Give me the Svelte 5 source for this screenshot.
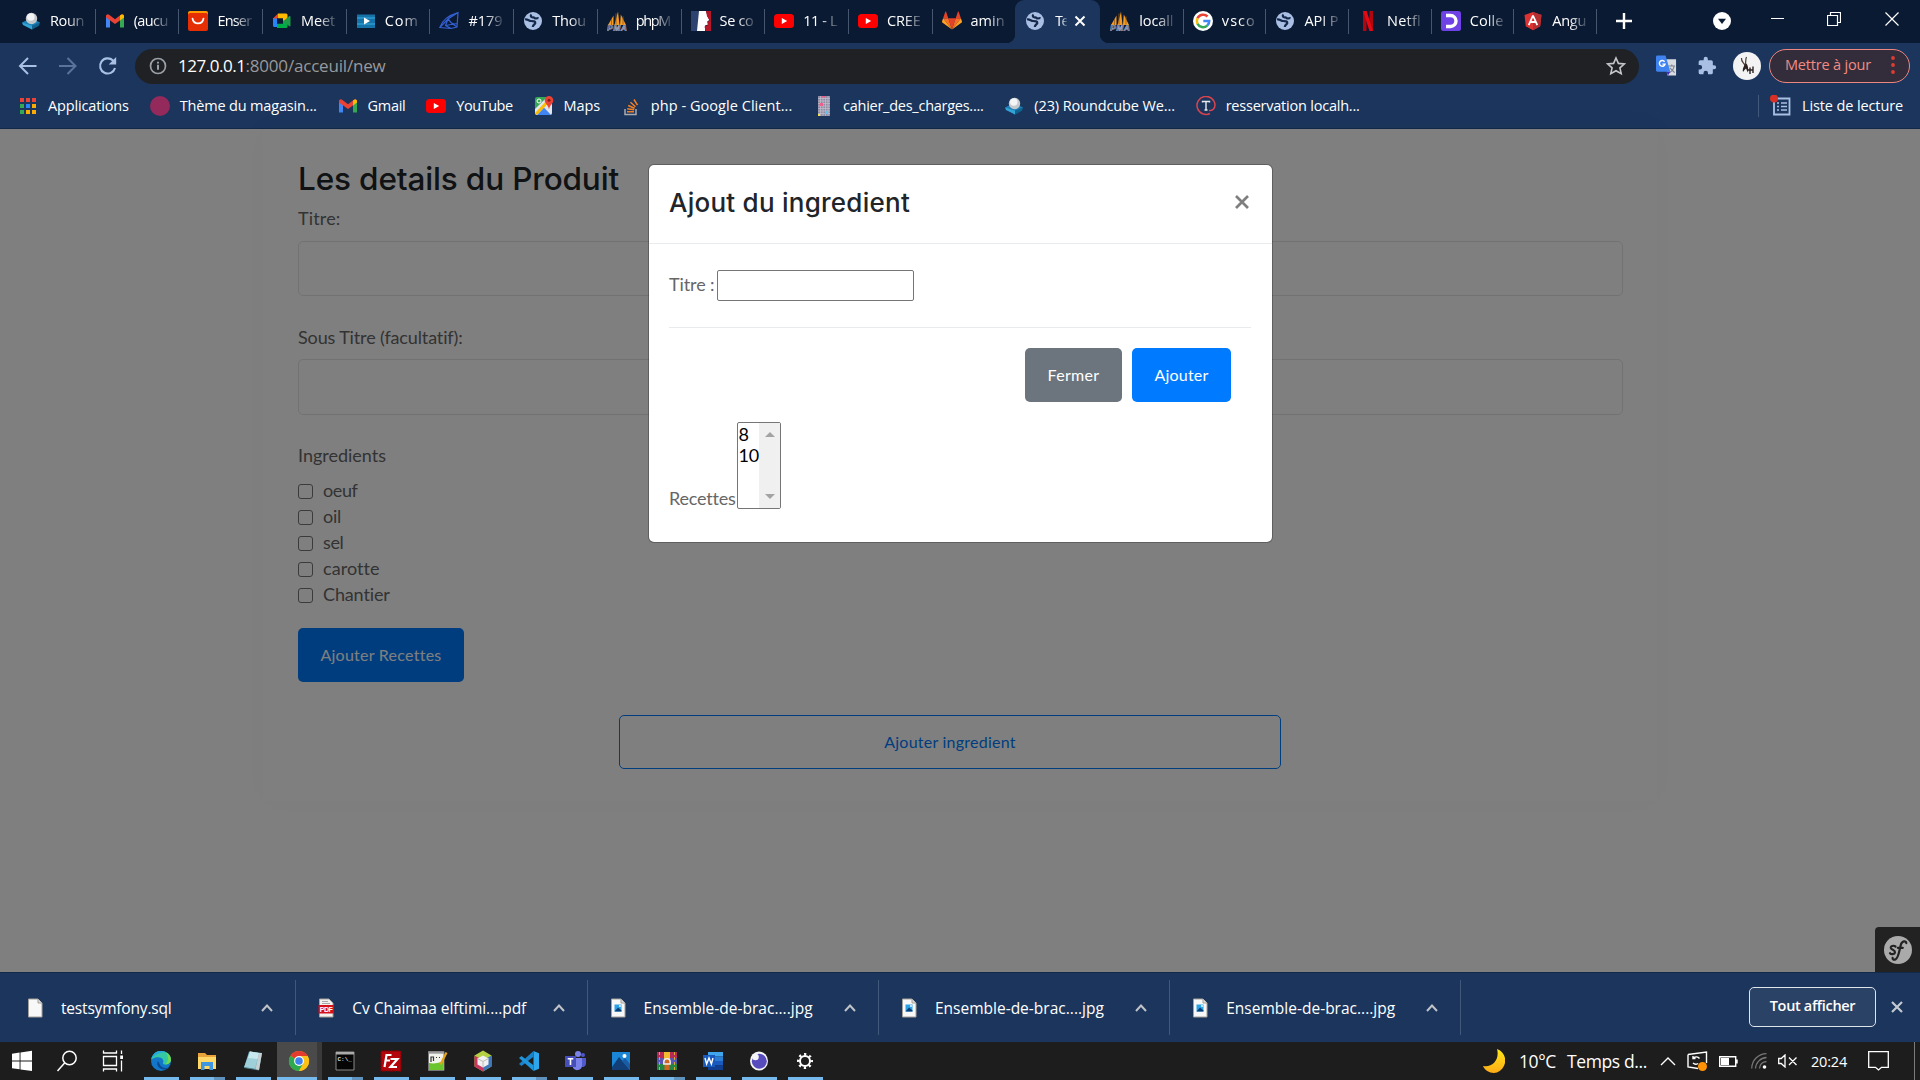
<script lang="ts">
  // Spreads or tightens the letters so that a label takes the given width.
  function fit(node: HTMLElement, width: number) {
    const natural = node.getBoundingClientRect().width;
    const count = Math.max(1, (node.textContent ?? '').length);
    node.style.letterSpacing = `${((width - natural) / count).toFixed(3)}px`;
  }

  const globe =
    '<circle cx="10" cy="10" r="9" fill="#a9c0e4"/><path d="M2 8.500c2.500-.8 4 1.500 6 1.500 2.500 0 4.500.3 4.300 2-.2 1.500-2.300 1.500-2.500 4" fill="none" stroke="#17294b" stroke-width="2.200"/><path d="M8.500 3.500C7 5 8 6.500 10 6.300c1.500-.2 1.300 1.200 2.800 1.200 1 0 1.700-.6 2.700-.4" fill="none" stroke="#17294b" stroke-width="2.200"/>';
  const youtube =
    '<rect y="3" width="20" height="14" rx="3.500" fill="#f00"/><path d="M7.800 6.900v6.200l5.400-3.100z" fill="#fff"/>';
  const gmail =
    '<path d="M1 16.500V5l4 3v8.500z" fill="#4285f4"/><path d="M15 16.500V8l4-3v11.500z" fill="#34a853"/><path d="M1 5.200C1 3.500 3 2.800 4.400 3.900L10 8.200v4.900L1 6.600z" fill="#ea4335"/><path d="M19 5.200c0-1.700-2-2.400-3.400-1.300L10 8.200v4.900l5-3.700V5.500L19 4.800z" fill="#ea4335"/><path d="M15 4.400c1.700-1.600 4-.9 4 .8v1.400l-4 3z" fill="#fbbc04"/>';
  const pma =
    '<path d="M1 14 6.500 4.500V14zM7.500 14 11 .5l1.500 13.500zM13 14l.8-10.500L19 14z" fill="#f59a22"/><path d="M9 2.500v11M16 5.500v8M4.500 8v6" stroke="#9a5a12" stroke-width=".8"/><text x="0" y="19.500" font-family="Liberation Sans" font-weight="700" font-style="italic" font-size="8.500" textLength="20" fill="#26325c" stroke="#a9adc4" stroke-width=".6">PMA</text>';
  const roundcube =
    '<path d="M1 11.500 10 7l9 4.500L11 18.500z" fill="#1c7fb5"/><path d="m1 11.500 10 3.200v3.800L2 14z" fill="#35a5d8"/><path d="m11 14.700 8-3.200-1 3.200-7 3.800z" fill="#11628f"/><circle cx="10.500" cy="7.500" r="5.700" fill="#c3c8cc"/><circle cx="9.800" cy="6" r="3.800" fill="#f3f4f5"/>';
  const icons: Record<string, string> = {
    globe, youtube, gmail, pma, roundcube,
    ali: '<path d="M0 2a2 2 0 0 1 2-2h16a2 2 0 0 1 2 2v4H0z" fill="#ff9a00"/><rect y="2" width="20" height="18" rx="2" fill="#e62e04"/><path d="M4.500 7.500c1 6.500 10 6.500 11 0" fill="none" stroke="#fff" stroke-width="1.700" stroke-linecap="round"/>',
    meet: '<path d="M1 7h4v9H2.500A1.500 1.500 0 0 1 1 14.500z" fill="#2684fc"/><path d="M6 2.500 1 7.500h5z" fill="#ea4335"/><path d="M6 2.500h8A1.500 1.500 0 0 1 15.500 4v4.500L11 11V7.500H6z" fill="#ffba00"/><path d="M5 12.500h6V9.500l4.500 1v5A1.500 1.500 0 0 1 14 17H5z" fill="#00ac47"/><path d="m11 10.500 6-5.300c.8-.6 1.500-.2 1.500.6v8.700c0 .8-.7 1.200-1.500.6z" fill="#1f9a49"/><path d="M5 7.500h6v5H5z" fill="#0b1a33"/>',
    video: '<rect x="1" y="3.500" width="18" height="13.500" fill="#1673a8"/><path d="M1 7h18M1 13h18" stroke="#2b9bd0" stroke-width="1.500"/><path d="M8 6.500v7l6-3.500z" fill="#fff"/>',
    mesh: '<path d="M.8 16.500C2.500 11.500 7 5 19 1.500L18 16 12 17.500.8 16.500zM19 1.500 9 8 6.500 14.500l5.500 3M9 8l3 3.500L18 16M6.500 14.500 18 12.500M9 8 .8 16.500" fill="none" stroke="#345fd0" stroke-width="1.200"/>',
    marianne: '<path d="M0 0h9v20H0z" fill="#2d4470"/><path d="M8 0h7l1.500 5 1.800 4-2 1.500.7 3-3 1v5.500H6z" fill="#fff"/><path d="M15 0h5v20h-5.500l-1-4.500 3.500-1.500-.5-3 2-1.700-2.500-4z" fill="#b4182a"/>',
    gitlab: '<path d="m10 18.500 3.700-11.300H6.300z" fill="#e24329"/><path d="M10 18.500 6.300 7.200H1.100z" fill="#fc6d26"/><path d="M1.100 7.200 0 10.600c-.1.300 0 .7.300.9l9.700 7z" fill="#fca326"/><path d="M1.100 7.200h5.200L4.100.8c-.1-.4-.6-.4-.8 0z" fill="#e24329"/><path d="m10 18.500 3.700-11.300h5.200z" fill="#fc6d26"/><path d="M18.900 7.200 20 10.600c.1.300 0 .7-.3.9L10 18.500z" fill="#fca326"/><path d="M18.900 7.200h-5.200L15.900.8c.1-.4.6-.4.800 0z" fill="#e24329"/>',
    google: '<circle cx="10" cy="10" r="10" fill="#fff"/><path d="M14.500 5.500A6.200 6.200 0 0 0 4.500 7.300" fill="none" stroke="#ea4335" stroke-width="2.600"/><path d="M4.500 7.300a6.200 6.200 0 0 0 0 5.400" fill="none" stroke="#fbbc04" stroke-width="2.600"/><path d="M4.500 12.700a6.200 6.200 0 0 0 9.700 1.900" fill="none" stroke="#34a853" stroke-width="2.600"/><path d="M14.200 14.600A6 6 0 0 0 16.200 10H10.300" fill="none" stroke="#4285f4" stroke-width="2.600"/>',
    netflix: '<path d="M5 0h3.500v20L5 20.300zM11.500 0H15v20.300l-3.500-.4z" fill="#b1060f"/><path d="M5 0h3.600L15 20.300l-3.600-.5z" fill="#e50914"/>',
    dyma: '<rect width="20" height="20" rx="2.500" fill="#6f42e5"/><path d="M5 4.500h4.500a5.500 5.500 0 0 1 0 11H5" fill="none" stroke="#fff" stroke-width="3.400"/>',
    angular: '<path d="m10 1 8.500 3-1.300 11.200L10 19.200l-7.200-4L1.500 4z" fill="#dd3333"/><path d="m10 1 8.500 3-1.300 11.200L10 19.200z" fill="#b52e31"/><path d="m10 4.500-4.300 9.700M10 4.500l4.300 9.700M7.300 11h5.400" stroke="#fff" stroke-width="1.800" fill="none"/>',
    apps: '<g fill="#ea4335"><path d="M2 2h4v4H2zM8 2h4v4H8zM14 2h4v4h-4z"/></g><path d="M2 8h4v4H2zM2 14h4v4H2z" fill="#34a853"/><path d="M8 8h4v4H8z" fill="#2684fc"/><path d="M14 8h4v4h-4zM8 14h4v4H8zM14 14h4v4h-4z" fill="#fbac04"/>',
    dot: '<circle cx="10" cy="10" r="10" fill="#932a5b"/>',
    maps: '<path d="M1 3a2 2 0 0 1 2-2h10L1 14z" fill="#34a853"/><path d="M1 13 13 1l5 6v10a2 2 0 0 1-2 2H3a2 2 0 0 1-2-2z" fill="#e3e6ea"/><path d="m3 19 7-7.500 7 7.500z" fill="#4285f4"/><path d="M1 17 14 3l2 2.500L3 19z" fill="#fbbc04"/><path d="M15 0a4.300 4.300 0 0 1 4.300 4.300C19.300 8 15.600 9 15 13.500 14.400 9 10.700 8 10.700 4.300A4.300 4.300 0 0 1 15 0z" fill="#ea4335"/><circle cx="15" cy="4.300" r="1.500" fill="#8c1b14"/><circle cx="5" cy="5" r="2" fill="none" stroke="#fff"/>',
    stack: '<path d="M4 13v5.500h11V13" fill="none" stroke="#a9abae" stroke-width="1.500"/><path d="M6 15.800h7M6.200 12.800l6.900 1M7.200 9.500l6.400 2.800M9.500 6.200l5 4.500M13 3.500l3.500 5.600" stroke="#f48024" stroke-width="1.500"/>',
    sheet: '<path d="M5 0h12v20H5z" fill="#8f8ca6"/><path d="M5 2.500h12M5 5h12M5 7.500h12M5 10h12M5 12.500h12M5 15h12M5 17.500h12M7.500 0v20M10 0v20M12.500 0v20M15 0v20" stroke="#c4c2d0" stroke-width=".7"/><path d="M9 0h4v1.500H9zM7 7h3v3H7z" fill="#f0608a"/><path d="M12 15h3v3h-3z" fill="#62c3ee"/><path d="M5 18h2v2H5z" fill="#f5e642"/>',
    tcircle: '<path d="M14 17.500A9 9 0 1 1 19 9c0 4-3 6-6 5.500" fill="none" stroke="#d9444e" stroke-width="1.500"/><path d="M6.500 6.500V5.500h7v1M10 5.500V14M8.500 14h3" fill="none" stroke="#e8eaf0" stroke-width="1.400"/>',
    file: '<path d="M3.500 1H13l4 4v14H3.500z" fill="#f8f8f8" stroke="#a4a09a"/><path d="M13 1v4h4" fill="#ddd" stroke="#a4a09a"/>',
    pdf: '<path d="M3.500 1H13l4 4v14H3.500z" fill="#f3f1f0" stroke="#a4a09a"/><path d="M6 3.500h6M6 5.500h8" stroke="#aaa"/><path d="M2.500 7h15.500v8.500H2.500z" fill="#d5101c"/><text x="3.800" y="13.800" font-family="Liberation Sans" font-weight="700" font-size="7" textLength="13" fill="#fff">PDF</text>',
    jpg: '<path d="M3.500 1H13l4 4v14H3.500z" fill="#f8f8f8" stroke="#a4a09a"/><path d="M13 1v4h4" fill="#ddd" stroke="#a4a09a"/><path d="M6.500 6.500h7v7h-7z" fill="#2aa2e8"/><path d="m6.500 13.500 3.500-4 3.500 3v1z" fill="#0c3d74"/><circle cx="12" cy="8" r=".9" fill="#fff"/>'
  };

  const desk: Record<string, string> = {
    windows: '<path d="M2 4.800 9.600 3.600v7.900H2zM10.500 3.500 22 1.800v9.700H10.500zM2 12.400h7.600v7.900L2 19.200zM10.500 12.400H22v9.700l-11.500-1.700z" fill="#fff"/>',
    search: '<circle cx="14.500" cy="9" r="6.700" fill="none" stroke="#fff" stroke-width="1.500"/><path d="M9.800 13.800 2.500 22" stroke="#fff" stroke-width="1.500"/>',
    taskview: '<path d="M1.500 1.500V4h13V1.500M1.500 22.500V20h13v2.500M1.500 7.500h13v9h-13zM19.500 1.500V5M19.500 11.500v11" fill="none" stroke="#fff" stroke-width="1.300"/><path d="M18.200 6.500h2.800v3.500h-2.800z" fill="#fff"/>',
    edge: '<circle cx="12" cy="12" r="10" fill="#1277c9"/><path d="M2.200 10.500C3.500 4.500 7.500 2 12 2c6 0 10 4 10 8.500 0 3.500-3 5-5.500 5-1.800 0-3-.7-2.500-1.500 2-4-3.500-8.500-11.800-3.500z" fill="#35c6a4"/><path d="M2.200 10.500C3.500 4.500 7.500 2 12 2c2 0 3.500.3 5 1.300-4-.2-11 1.200-14.800 7.200z" fill="#23a8e0"/><path d="M9 12c-2.500 4 1.500 9 7 8.500 2-.2 3.500-1.200 4.500-2.200-3.500 1.500-8.500 1-10-3.500z" fill="#0b4a94"/><path d="M17 3.500c4 2 5.500 5.500 4.800 8.500-1 2.500-3.500 3.400-5.300 3.400 3-3.400 3.500-7.900.5-11.900z" fill="#71d950"/>',
    folder: '<path d="M3 4h7l2 2h9v14H3z" fill="#e8a33a"/><path d="M3 8h18v12H3z" fill="#ffd868"/><path d="M6 21v-8h12v8h-3.500v-4h-5v4z" fill="#3c97e0"/>',
    notebook: '<path d="M8 2.500 21 4l-3 17L3 18.500z" fill="#6fb0c0"/><path d="M9 2.500 18 4l-4 16L3 18.500z" fill="#9fd0da"/><path d="M9 2.500 18 4l-1.500 6-9.500-1z" fill="#c9e8ee"/><path d="M3 18.500l15 2.500" stroke="#4f7b88" stroke-width="1"/><path d="m18 4 3 0-3 17-3.500-.7z" fill="#c7cfd1"/>',
    chrome: '<circle cx="12" cy="12" r="10" fill="#fbc116"/><path d="M12 12 3.300 7A10 10 0 0 1 20.700 7z" fill="#e33b2e"/><path d="M12 12 3.300 7A10 10 0 0 0 12 22l4.300-7.500z" fill="#2da94f"/><path d="M12 7h8.700a10 10 0 0 1-8.700 15l4.300-7.500z" fill="#fbc116"/><circle cx="12" cy="12" r="4.900" fill="#fff"/><circle cx="12" cy="12" r="3.800" fill="#3f82ed"/>',
    cmd: '<path d="M3 3h18v18H3z" fill="#050505" stroke="#8a8a8a"/><path d="M3 3h18v2.500H3z" fill="#aaa"/><text x="4.500" y="12" font-family="Liberation Mono" font-weight="700" font-size="6" fill="#ddd">C:\\_</text>',
    filezilla: '<path d="M2 2h20v20H2z" fill="#b3050c" stroke="#7c0408" stroke-width="1.500" stroke-dasharray="1.500 1"/><path d="M12.500 6H7.500L5.500 18M6.500 11.500h4.500M11.500 10h7l-7 8h6.500" fill="none" stroke="#fff" stroke-width="2.200"/>',
    notepadpp: '<path d="M3.500 2.500h15.500v19H3.500z" fill="#f3f3ee" stroke="#777"/><path d="M4 14c5 1 10 0 14.500-2v9H4z" fill="#6bc52e"/><path d="M3.500 2.500h15.500v2.200H3.500z" fill="#9b9b9b"/><path d="M6 13V8h2.500v4M11 8.500h1M14 8.500h1" stroke="#333" fill="none" stroke-width="1.200"/><path d="m21.500 3.500-6 12" stroke="#e6a519" stroke-width="2.200"/>',
    netbeans: '<path d="M12 1.500 20.500 6.500v11L12 22.500l-8.500-5v-11z" fill="#b5d043"/><path d="M3.500 6.500v11l8.500 5v-5L8 14V9z" fill="#c93661"/><path d="M20.500 6.500v11l-8.500 5v-5l4-3.500V9z" fill="#3e78b8"/><path d="m12 6.500 5.500 3v6L12 18.500 6.500 15.500v-6z" fill="#f1f1f1"/><path d="m6.500 9.500 5.500 3 5.500-3M12 12.500v6" stroke="#bbb" fill="none"/>',
    vscode: '<path d="M16.500 2 22 4.300v15.400L16.500 22z" fill="#2da6ee"/><path d="M16.500 2v5.800L4.500 17 2 15z" fill="#1a83ca"/><path d="M16.500 22v-5.800L4.500 7 2 9z" fill="#1f95dc"/>',
    teams: '<circle cx="15" cy="5" r="3" fill="#7b83eb"/><circle cx="20" cy="6" r="2" fill="#5059c9"/><path d="M17 9h6v6a3.500 3.500 0 0 1-6 2z" fill="#5059c9"/><path d="M10 9h9v8a5 5 0 0 1-9 2z" fill="#7b83eb"/><path d="M2 7h11v11H2z" fill="#464eb8"/><path d="M4.700 9.700h5.600M7.500 9.700v6.300" stroke="#fff" stroke-width="1.600"/>',
    photos: '<path d="M3 3h18v18H3z" fill="#1b86d8"/><path d="M3 18 10 8l11 13H3z" fill="#123f78"/><path d="m13 12 3-3 5 6v6z" fill="#1a5ca3"/><circle cx="15.500" cy="7" r="2" fill="#fff"/>',
    winrar: '<path d="M2 3h20v6H2z" fill="#b72a55"/><path d="M2 9h20v6H2z" fill="#5657b5"/><path d="M2 15h20v6H2z" fill="#238443"/><path d="M4.500 3v18M19.500 3v18" stroke="#d8a836" stroke-width="1" stroke-dasharray="3 2"/><path d="M9.500 3h5v18h-5z" fill="#d06622"/><path d="M9 3h6v7H9z" fill="#f1bd2e"/><path d="M8.800 13a3.200 3.200 0 0 1 6.400 0v2H8.800z" fill="none" stroke="#eee" stroke-width="1.500"/>',
    word: '<path d="M7 3h15v4.500H7z" fill="#41a5ee"/><path d="M7 7.500h15V12H7z" fill="#2b7cd3"/><path d="M7 12h15v4.500H7z" fill="#185abd"/><path d="M7 16.500h15V21H7z" fill="#103f91"/><path d="M2 6h12v12H2z" fill="#185abd"/><path d="m4 9 1.600 6L8 9l2.400 6L12 9" fill="none" stroke="#fff" stroke-width="1.400"/>',
    eclipse: '<ellipse cx="12" cy="12" rx="9" ry="9.500" fill="#f5f5f5"/><circle cx="12.300" cy="12.200" r="7.500" fill="#574bbd"/><circle cx="8.500" cy="8" r="3.300" fill="#f5f5f5"/>',
    gear: '<circle cx="12" cy="12" r="5" fill="none" stroke="#fff" stroke-width="2"/><circle cx="12" cy="12" r="6.700" fill="none" stroke="#fff" stroke-width="2.600" stroke-dasharray="2.200 3.060" stroke-dashoffset="1.100"/>'
  };

  const tabs = [
    ['roundcube', 'Roun'], ['gmail', '(aucu'], ['ali', 'Enser'], ['meet', 'Meet'], ['video', 'Com'],
    ['mesh', '#179'], ['globe', 'Thou'], ['pma', 'phpM'], ['marianne', 'Se co'], ['youtube', '11 - L'],
    ['youtube', 'CREE'], ['gitlab', 'amin']
  ];
  const tabsAfter = [
    ['pma', 'locall'], ['google', 'vsco'], ['globe', 'API P'], ['netflix', 'Netfl'], ['dyma', 'Colle'], ['angular', 'Angu']
  ];
  const bookmarks: [string, string, number][] = [
    ['apps', 'Applications', 81], ['dot', 'Thème du magasin...', 137], ['gmail', 'Gmail', 38],
    ['youtube', 'YouTube', 56.5], ['maps', 'Maps', 36.5], ['stack', 'php - Google Client...', 141.5],
    ['sheet', 'cahier_des_charges....', 140.5], ['roundcube', '(23) Roundcube We...', 140.500], ['tcircle', 'resservation localh...', 134]
  ];
  const ingredients: [string, number][] = [['oeuf', 34.5], ['oil', 18], ['sel', 20.5], ['carotte', 56], ['Chantier', 67]];
  const downloads: [string, string, number][] = [
    ['file', 'testsymfony.sql', 110.5], ['pdf', 'Cv Chaimaa elftimi....pdf', 174],
    ['jpg', 'Ensemble-de-brac....jpg', 169], ['jpg', 'Ensemble-de-brac....jpg', 169], ['jpg', 'Ensemble-de-brac....jpg', 169]
  ];
  // name, and how the window indicator below the icon looks
  const apps: [string, string][] = [
    ['windows', ''], ['search', ''], ['taskview', ''], ['edge', 'one'], ['folder', 'many'], ['notebook', 'one'],
    ['chrome', 'current'], ['cmd', 'many'], ['filezilla', 'one'], ['notepadpp', 'one'], ['netbeans', 'one'],
    ['vscode', 'many'], ['teams', 'one'], ['photos', 'one'], ['winrar', 'many'], ['word', 'one'], ['eclipse', 'one'], ['gear', 'one']
  ];
</script>

{#snippet icon(name: string)}
  <svg class="icon" viewBox="0 0 20 20">{@html icons[name]}</svg>
{/snippet}

<div class="screen">
  <div class="tabstrip">
    {#each tabs as [name, title], i}
      <div class="tab wide" class:last={i === tabs.length - 1}>{@render icon(name)}<span class="title"><span use:fit={34}>{title}</span></span></div>
    {/each}
    <div class="tab active">
      {@render icon('globe')}<span class="title short"><span>Te</span></span>
      <svg class="close" viewBox="0 0 12 12"><path d="M1.500 1.500l9 9M10.500 1.500l-9 9" stroke="#fff" stroke-width="2" /></svg>
    </div>
    {#each tabsAfter as [name, title]}
      <div class="tab">{@render icon(name)}<span class="title"><span use:fit={34}>{title}</span></span></div>
    {/each}
    <svg class="plus" viewBox="0 0 16 16"><path d="M8 0v16M0 8h16" stroke="#fff" stroke-width="2.400" /></svg>
    <div class="window-buttons">
      <svg width="18" height="18" viewBox="0 0 18 18"><circle cx="9" cy="9" r="9" fill="#fff" /><path d="M5 6.800h8l-4 5.200z" fill="#0b1a33" /></svg>
      <svg width="13" height="13" viewBox="0 0 13 13"><path d="M0 6.500h13" stroke="#fff" /></svg>
      <svg width="14" height="14" viewBox="0 0 14 14"><path d="M.5 3.500h10v10H.5zM3.500 3.500v-3h10v10h-3" fill="none" stroke="#fff" stroke-width="1.200" /></svg>
      <svg width="14" height="14" viewBox="0 0 14 14"><path d="M.5.5l13 13M13.500.5l-13 13" stroke="#fff" stroke-width="1.200" /></svg>
    </div>
  </div>

  <div class="toolbar">
    <svg class="nav" viewBox="0 0 20 20"><path d="M18.500 10H2.500M10 2 2 10l8 8" fill="none" stroke="#a9c0e4" stroke-width="2" /></svg>
    <svg class="nav dim" viewBox="0 0 20 20"><path d="M1 10h16M9.500 2l8 8-8 8" fill="none" stroke="#a9c0e4" stroke-width="2" /></svg>
    <svg class="nav" viewBox="0 0 20 20"><path d="M17 12A7.600 7.600 0 1 1 15 4.500L16.500 6" fill="none" stroke="#a9c0e4" stroke-width="2.100" /><path d="M18.200 1v7.500h-7.500z" fill="#a9c0e4" /></svg>
    <div class="omnibox">
      <svg width="18" height="18" viewBox="0 0 18 18"><circle cx="9" cy="9" r="7.500" fill="none" stroke="#9aa0a6" stroke-width="1.700" /><path d="M9 7.800v5M9 4.700v1.900" stroke="#9aa0a6" stroke-width="2" /></svg>
      <div class="url"><span class="host" use:fit={67.5}>127.0.0.1</span><span use:fit={140}>:8000/acceuil/new</span></div>
      <svg class="star" viewBox="0 0 20 20"><path d="m10 2 2.400 5.400 5.900.6-4.400 3.900 1.300 5.800L10 14.700l-5.200 3 1.300-5.800L1.700 8l5.900-.6z" fill="none" stroke="#c3c6ca" stroke-width="1.600" /></svg>
    </div>
    <svg class="translate" viewBox="0 0 22 22"><path d="M9 4h12v17H12z" fill="#d8dbe0" /><path d="M13 11h7M16.500 9.500V11M14 18c3-1.500 4.500-4 5-7M14.500 13l5 5" stroke="#78818c" stroke-width="1.200" fill="none" /><path d="M1.500 0h8.500l5 17H1.500A1.500 1.500 0 0 1 0 15.500v-14A1.500 1.500 0 0 1 1.500 0z" fill="#3f83f1" /><path d="m11 17 4 0-2.500 4z" fill="#4527c9" /><path d="M9 6.500A3 3 0 1 0 9.500 9H6.700" fill="none" stroke="#fff" stroke-width="1.500" /></svg>
    <svg class="puzzle" viewBox="0 0 24 24"><path d="M20.500 11H19V7a2 2 0 0 0-2-2h-4V3.500a2.500 2.500 0 0 0-5 0V5H4a2 2 0 0 0-2 2v3.800h1.500a2.700 2.700 0 0 1 0 5.400H2V20a2 2 0 0 0 2 2h3.800v-1.500a2.700 2.700 0 0 1 5.400 0V22H17a2 2 0 0 0 2-2v-4h1.500a2.500 2.500 0 0 0 0-5z" fill="#a9c0e4" /></svg>
    <svg class="avatar" viewBox="0 0 28 28"><circle cx="14" cy="14" r="14" fill="#f3f3f4" /><path d="M8.500 6c-.5 4 3 5 3.500 8M13.500 5c-1.500 3 0 5-1.500 8" fill="none" stroke="#4a3a36" stroke-width="1.200" /><path d="M10 20c-1-4 2-8 3.500-8.500 1.500 2 2 5 1.500 9-1-1.500-1.500-3-2-4-1 1-2 2-3 3.500z" fill="#2c2120" /><path d="M15 18h5M17 15.500V22M20 14.500V21" fill="none" stroke="#2c2120" stroke-width="1.400" /></svg>
    <div class="update">
      <span use:fit={86}>Mettre à jour</span>
      <svg width="4" height="20" viewBox="0 0 4 20"><g fill="#e03c31"><circle cx="2" cy="3" r="1.900" /><circle cx="2" cy="10" r="1.900" /><circle cx="2" cy="17" r="1.900" /></g></svg>
    </div>
  </div>

  <div class="bookmarks">
    {#each bookmarks as [name, label, width]}
      <div class="bookmark">{@render icon(name)}<span use:fit={width}>{label}</span></div>
    {/each}
    <div class="reading">
      <svg width="22" height="22" viewBox="0 0 22 22"><path d="M4 3.500h15.500v16H4z" fill="none" stroke="#a9c0e4" stroke-width="1.800" /><path d="M7 8h2M11 8h6M7 11.500h2M11 11.500h6M7 15h2M11 15h6" stroke="#a9c0e4" stroke-width="1.500" /><circle cx="4" cy="3.500" r="4" fill="#d93025" /></svg>
      <span use:fit={101}>Liste de lecture</span>
    </div>
  </div>

  <div class="page">
    <div class="card">
      <h2><span use:fit={321}>Les details du Produit</span></h2>
      <div class="label"><span use:fit={42.500}>Titre:</span></div>
      <div class="field"></div>
      <div class="label second"><span use:fit={165}>Sous Titre (facultatif):</span></div>
      <div class="field"></div>
      <div class="label third"><span use:fit={88}>Ingredients</span></div>
      <div class="checks">
        {#each ingredients as [label, width]}
          <div class="check"><i></i><span use:fit={width}>{label}</span></div>
        {/each}
      </div>
      <div class="btn add-recipe"><span use:fit={120.500}>Ajouter Recettes</span></div>
      <div class="btn outline"><span use:fit={131.500}>Ajouter ingredient</span></div>
    </div>

    <div class="overlay">
      <div class="modal">
        <div class="modal-header">
          <h4><span use:fit={241}>Ajout du ingredient</span></h4>
          <svg class="modal-close" viewBox="0 0 14 14"><path d="M1 1l12 12M13 1L1 13" stroke="#7f7f7f" stroke-width="2.700" /></svg>
        </div>
        <div class="modal-body">
          <div class="row"><span use:fit={45.500}>Titre :</span><div class="text-input"></div></div>
          <div class="modal-footer">
            <div class="btn grey"><span use:fit={52}>Fermer</span></div>
            <div class="btn blue"><span use:fit={54}>Ajouter</span></div>
          </div>
          <div class="row recipes">
            <span use:fit={66}>Recettes</span>
            <div class="listbox">
              <div class="options"><span>8</span><span>10</span></div>
              <div class="scroll"><i class="up"></i><i class="down"></i></div>
            </div>
          </div>
        </div>
      </div>
    </div>

    <div class="symfony">
      <svg width="28" height="28" viewBox="0 0 28 28"><circle cx="14" cy="14" r="14" fill="#aaa" /><g fill="none" stroke="#222" stroke-width="2.200" stroke-linecap="round"><path d="M11.500 10.500c-2-1.500-5-.5-4.700 1.500.4 2 4.500 1.700 4.200 4.300-.3 2.200-4 2.500-5 .8" /><path d="M22.300 7.200c.2-2.400-3.800-2.700-5.200.8-1.500 4-2.200 14-5.600 15.400-2.200.8-3.200-.4-2.900-1.600M13.800 11.800h5" /></g></svg>
    </div>
  </div>

  <div class="downloads">
    {#each downloads as [name, label, width]}
      <div class="download">
        {@render icon(name)}<span use:fit={width}>{label}</span>
        <svg class="chev" viewBox="0 0 12 8"><path d="M1 7l5-5.500L11 7" fill="none" stroke="#c0c3c8" stroke-width="2" /></svg>
      </div>
    {/each}
    <div class="show-all"><span use:fit={85.500}>Tout afficher</span></div>
    <svg class="shelf-close" viewBox="0 0 12 12"><path d="M1 1l10 10M11 1L1 11" stroke="#c3c9d2" stroke-width="2.200" /></svg>
  </div>

  <div class="taskbar">
    {#each apps as [name, state]}
      <div class="app {state}"><svg viewBox="0 0 24 24">{@html desk[name]}</svg></div>
    {/each}
    <div class="tray">
      <svg class="moon" viewBox="0 0 22 24"><defs><linearGradient id="moonfill" x1="0" y1="0" x2="0" y2="1"><stop offset="0" stop-color="#ffe818" /><stop offset="1" stop-color="#ffab16" /></linearGradient></defs><path d="M14 0C25 4 25 19 14 23.500 8 25 2 22 0 17c9 2 17-6 14-17z" fill="url(#moonfill)" /></svg>
      <span class="weather temp" use:fit={37}>10°C</span>
      <span class="weather sky" use:fit={80}>Temps d...</span>
      <svg class="up-arrow" viewBox="0 0 16 9"><path d="M1 8l7-7 7 7" fill="none" stroke="#fff" stroke-width="1.400" /></svg>
      <svg class="sync" viewBox="0 0 21 20"><path d="M1 3.500 19.500 1v11M11 17.500 1 16V3.500" fill="none" stroke="#fff" stroke-width="1.400" /><path d="M12.500 7.500a4 4 0 0 0-6-.5M6 5v2.500h2.500M6 12a4 4 0 0 0 5 .5" fill="none" stroke="#fff" stroke-width="1.400" /><circle cx="15.500" cy="15.500" r="4.500" fill="#ff9305" /></svg>
      <svg class="battery" viewBox="0 0 19 11"><path d="M.7.700h16v9.600H.700zM18 3.500v4" fill="none" stroke="#fff" stroke-width="1.400" /><path d="M2 2h8v7H2z" fill="#fff" /></svg>
      <svg class="wifi" viewBox="0 0 16 16"><g fill="none" stroke="#777" stroke-width="1.300"><path d="M.7 15.500C1 7 7 1 15.500.7M4.500 15.500c.3-6 5-10.700 11-11M8.500 15.500c.2-4 3-6.800 7-7" /></g><circle cx="13.500" cy="14" r="1.800" fill="#fff" /></svg>
      <svg class="speaker" viewBox="0 0 20 14"><path d="M.7 4.500h2.500L7 1v12L3.200 9.500H.7zM11 3.500l7.500 7.500M18.500 3.500 11 11" fill="none" stroke="#fff" stroke-width="1.300" /></svg>
      <span class="clock" use:fit={36}>20:24</span>
      <svg class="notice" viewBox="0 0 21 20"><path d="M.7.700h19.600v15.600h-6.800L10.500 19l-3-2.700H.7z" fill="none" stroke="#fff" stroke-width="1.300" /></svg>
    </div>
  </div>
</div>

<style>
  :global(body) { margin: 0; overflow: hidden; }
  * { box-sizing: border-box; }
  svg { display: block; flex: none; }
  .screen {
    width: 1920px; height: 1080px; display: flex; flex-direction: column;
    font-family: 'Open Sans', 'Noto Sans', sans-serif; font-size: 14.5px; color: #fff; white-space: nowrap;
  }
  .icon { width: 20px; height: 20px; }

  .tabstrip { height: 43px; background: #0b1a33; display: flex; padding-left: 11px; flex: none; }
  .tab { width: 82.600px; height: 43px; display: flex; align-items: center; padding: 0 0 1px 10px; gap: 9px; position: relative; flex: none; }
  .tab.wide { width: 83.700px; }
  .tab:not(.active):not(.last)::after { content: ''; position: absolute; right: -1px; top: 9px; width: 1px; height: 25px; background: #47566f; }
  .title { width: 35px; padding-bottom: 1px; mask-image: linear-gradient(90deg, #000 50%, rgba(0, 0, 0, .15)); }
  .title.short { width: 12px; letter-spacing: -1.500px; font-size: 14px; }
  .tab.active { width: 85px; background: #1b355c; border-radius: 9px 9px 0 0; }
  .tab.active::before {
    content: ''; position: absolute; left: -9px; right: -9px; bottom: 0; height: 9px;
    background:
      radial-gradient(circle at 0 0, transparent 9px, #1b355c 9.500px) 0 0 / 9px 9px no-repeat,
      radial-gradient(circle at 100% 0, transparent 9px, #1b355c 9.500px) 100% 0 / 9px 9px no-repeat;
  }
  .tab.active .title { margin-left: 1px; }
  .close { width: 12px; height: 12px; margin-left: -2px; }
  .plus { width: 16px; height: 16px; margin: 13px 0 0 20px; }
  .window-buttons { margin-left: auto; display: grid; grid-template-columns: 58px 56px 58px 35px; align-items: start; padding-top: 12px; }

  .toolbar { height: 44px; background: #1b355c; display: flex; align-items: center; padding: 2px 10px 0 18px; flex: none; }
  .nav { width: 20px; height: 20px; margin-right: 20px; margin-bottom: 1px; }
  .nav.dim { opacity: .45; }
  .omnibox { width: 1504px; height: 35px; margin-left: -3px; border-radius: 18px; background: #202124; display: flex; align-items: center; padding: 0 13px 0 14px; }
  .url { margin-left: 11px; font-size: 17px; color: #979a9e; padding-bottom: 2px; }
  .url span { display: inline-block; }
  .url .host { color: #fff; }
  .star { width: 20px; height: 20px; margin-left: auto; }
  .translate { width: 21px; height: 22px; margin-left: 17px; }
  .puzzle { width: 20px; height: 20px; margin-left: 20px; }
  .avatar { width: 28px; height: 28px; margin-left: 16px; }
  .update { width: 141px; height: 34px; margin-left: 8px; border: 1.500px solid #ee8680; border-radius: 17px; background: #332d3b; color: #f28b82; display: flex; align-items: center; justify-content: space-between; padding: 0 14px 3px 15px; }

  .bookmarks { height: 42px; background: #1b355c; border-bottom: 1px solid #14284a; display: flex; align-items: center; gap: 20.900px; padding: 0 17px 3px 18px; flex: none; }
  .bookmark { display: flex; align-items: center; gap: 9.900px; }
  .bookmark span, .reading span { padding-bottom: 2px; }
  .reading { margin-left: auto; display: flex; align-items: center; gap: 10px; border-left: 1px solid #41587b; padding-left: 11px; }

  .page { height: 843px; background: #fff; position: relative; flex: none; font-family: Lato, sans-serif; font-size: 18px; color: #666; display: flex; flex-direction: column; align-items: center; }
  .card { width: 1394px; height: 672px; padding: 31px 34px 0 35px; box-shadow: 0 0 30px rgba(0, 0, 0, .03); display: flex; flex-direction: column; }
  h2, h4 { margin: 0; font-family: Inter, sans-serif; font-weight: 500; color: #212529; }
  h2 { font-size: 31.500px; line-height: 37px; height: 38px; }
  .label { height: 26px; line-height: 26px; margin: 7px 0 10px; }
  .label.second { margin: 28px 0 9px; }
  .label.third { margin: 27px 0 9px; }
  .field { height: 55px; border: 1px solid #e4e4e4; border-radius: 5px; flex: none; }
  .label.second + .field { height: 56px; }
  .check { height: 26px; line-height: 26px; display: flex; align-items: center; }
  .check i { width: 15px; height: 15px; border: 1.500px solid #767676; border-radius: 3px; margin: 2px 10px 0 0; }
  .btn { height: 54px; border-radius: 5px; display: flex; align-items: center; justify-content: center; font-size: 16px; color: #fff; padding-bottom: 1px; flex: none; }
  .add-recipe { width: 166px; background: #007bff; margin-top: 21px; }
  .outline { width: 662px; margin: 33px 0 0 321px; border: 1px solid #007bff; color: #007bff; }

  .overlay { position: absolute; inset: 0; background: rgba(0, 0, 0, .5); }
  .modal { width: 625px; height: 379px; margin: 35px 0 0 648px; background: #fff; background-clip: padding-box; border: 1px solid rgba(0, 0, 0, .25); border-radius: 6px; }
  .modal-header { height: 79px; display: flex; align-items: flex-start; justify-content: space-between; padding: 18px 23px 0 20px; border-bottom: 1px solid #e9ecef; }
  h4 { font-size: 26px; line-height: 40px; }
  .modal-close { width: 14px; height: 14px; margin-top: 12px; }
  .modal-body { padding: 26px 21px 0 20px; }
  .row { display: flex; }
  .row > span { line-height: 29px; }
  .text-input { width: 197px; height: 31px; margin-left: 2px; border: 1px solid #767676; border-radius: 2px; }
  .modal-footer { height: 95px; margin-top: 26px; border-top: 1px solid #e9ecef; padding: 20px 20px 0 0; display: flex; justify-content: flex-end; gap: 10px; }
  .grey { width: 97px; background: #6c757d; }
  .blue { width: 99px; background: #007bff; }
  .recipes { align-items: flex-end; }
  .row.recipes > span { line-height: 22px; }
  .listbox { width: 44px; height: 87px; margin-left: 1px; border: 1px solid #767676; border-radius: 2px; display: flex; justify-content: space-between; color: #000; font-size: 18px; }
  .options { display: flex; flex-direction: column; padding: 1px 0 0 1px; line-height: 21px; letter-spacing: -.2px; }
  .scroll { width: 21px; background: #f0f0f0; display: flex; flex-direction: column; align-items: center; justify-content: space-between; padding: 9px 0; flex: none; }
  .scroll i { border: 5px solid transparent; }
  .scroll .up { border-top: 0; border-bottom: 5px solid #a3a3a3; }
  .scroll .down { border-bottom: 0; border-top: 5px solid #a3a3a3; }
  .symfony { position: absolute; right: 0; bottom: 0; width: 45px; height: 45px; background: #222; border-radius: 4px 0 0 0; padding: 9px; }

  .downloads { height: 70px; background: #1b355c; border-top: 1px solid #14284a; display: flex; align-items: center; padding-left: 4px; font-size: 15.500px; flex: none; }
  .download { width: 291.300px; height: 55px; display: flex; align-items: center; padding: 0 23px 0 21px; position: relative; flex: none; }
  .download::after { content: ''; position: absolute; right: -1px; top: 0; width: 1px; height: 55px; background: #41587b; }
  .download > span { margin-left: 16px; }
  .chev { width: 12px; height: 8px; margin: 0 -1px 0 auto; }
  .show-all { width: 127px; height: 40px; margin: 0 0 2px auto; padding-bottom: 2px; border: 1px solid #dfe3ea; border-radius: 5px; background: #294265; display: flex; align-items: center; justify-content: center; font-weight: 600; font-size: 14.500px; }
  .shelf-close { width: 12px; height: 12px; margin: 0 17px 2px 15px; }

  .taskbar { height: 38px; background: #1d1d1d; display: flex; flex: none; }
  .app { width: 46px; height: 38px; display: flex; justify-content: center; padding-top: 7px; position: relative; flex: none; }
  .app:nth-child(1) { width: 44px; }
  .app:nth-child(3) { width: 48px; }
  .app svg { width: 24px; height: 24px; }
  .one::after, .many::after, .current::after { content: ''; position: absolute; left: 6px; bottom: 0; width: 35px; height: 3px; background: #76b9ed; }
  .many::after { background: linear-gradient(90deg, #76b9ed 24px, #5f93bd 24px); }
  .current { background: linear-gradient(90deg, transparent 1px, #4a4a4a 1px 41px, #3a3a3a 41px); }
  .current::after { left: 1px; width: 40px; }
  .tray { margin-left: auto; width: 438px; display: flex; align-items: center; border-right: 1px solid #7b7b7b; margin-right: 5px; }
  .moon { width: 22px; height: 24px; margin-left: 6px; }
  .weather { font-size: 17.500px; }
  .temp { margin-left: 14px; }
  .sky { margin-left: 11px; }
  .up-arrow { width: 16px; height: 9px; margin-left: 13px; }
  .sync { width: 21px; height: 20px; margin-left: 11px; }
  .battery { width: 19px; height: 11px; margin-left: 11px; }
  .wifi { width: 16px; height: 16px; margin-left: 13px; }
  .speaker { width: 20px; height: 14px; margin-left: 11px; }
  .clock { margin-left: 13px; }
  .notice { width: 21px; height: 20px; margin-left: 21px; }
</style>
